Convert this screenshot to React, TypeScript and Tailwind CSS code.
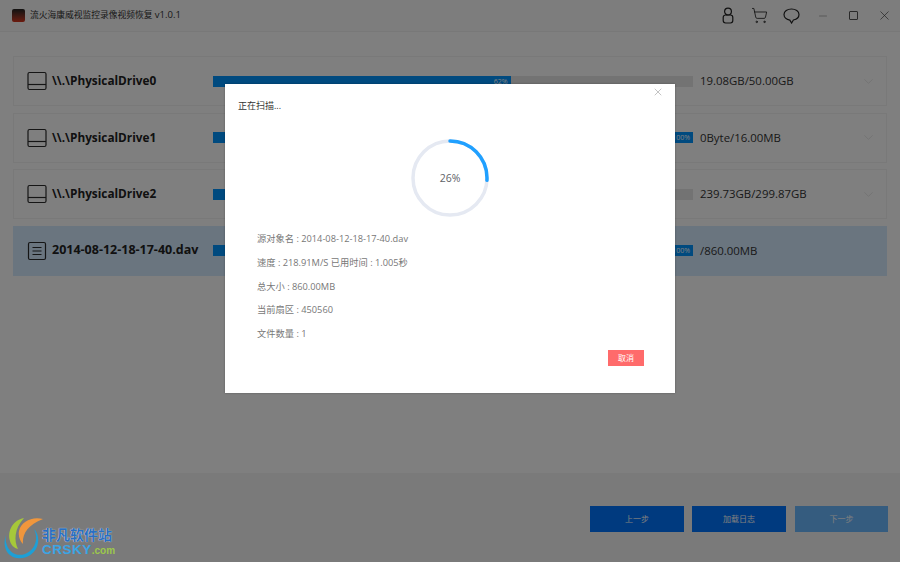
import React from 'react';
import { ChevronDown, ShoppingCart, X, Minus } from 'lucide-react';

const font = "font-['Open_Sans','Noto_Sans_CJK_SC',sans-serif]";

const rows = [
  { name: '\\\\.\\PhysicalDrive0', pct: 62, size: '19.08GB/50.00GB', icon: 'disk' },
  { name: '\\\\.\\PhysicalDrive1', pct: 100, size: '0Byte/16.00MB', icon: 'disk' },
  { name: '\\\\.\\PhysicalDrive2', pct: 80, size: '239.73GB/299.87GB', icon: 'disk' },
  { name: '2014-08-12-18-17-40.dav', pct: 100, size: '/860.00MB', icon: 'file', active: true },
];

const infoLines = [
  '源对象名 : 2014-08-12-18-17-40.dav',
  '速度 : 218.91M/S 已用时间 : 1.005秒',
  '总大小 : 860.00MB',
  '当前扇区 : 450560',
  '文件数量 : 1',
];

const DiskIcon = () => (
  <svg width="20" height="20" viewBox="0 0 20 20" fill="none" stroke="#2b2b2b" strokeWidth="1.2">
    <rect x="1" y="1.5" width="18" height="17" rx="1.5" />
    <path d="M1 13.5h18" />
  </svg>
);

const FileIcon = () => (
  <svg width="20" height="20" viewBox="0 0 20 20" fill="none" stroke="#2b2b2b" strokeWidth="1.2">
    <rect x="1.5" y="1.5" width="17" height="17" rx="1.5" />
    <path d="M5.5 6.5h9M5.5 10h9M5.5 13.5h9" />
  </svg>
);

const Logo = () => (
  <svg width="42" height="42" viewBox="0 0 42 42">
    <path d="M21 1C10 3 4 14 7 24c1 4 4 7 8 8C11 24 11 12 21 1z" fill="#a6c83a" />
    <path d="M40 2C30-1 18 4 16 14c-1 5 1 10 4 13C19 18 24 8 40 2z" fill="#f0963c" />
    <path d="M31 12c5 10 1 21-9 25C13 40 5 35 3 25c-1-4 0-8 2-11-6 10-4 22 5 26 10 4 23-2 25-14 1-6-1-11-4-14z" fill="#1d9fd6" />
  </svg>
);

const App: React.FC = () => {
  return (
    <div className={`relative w-[900px] h-[562px] overflow-hidden bg-white ${font}`}>
      {/* Title bar */}
      <div className="h-[32px] flex items-center bg-[#fbfbfb] border-b border-[#f0f0f0] pl-[12px] pr-[8px]">
        <div className="w-[13px] h-[13px] rounded-[2px] bg-gradient-to-b from-[#222] to-[#d8341c]" />
        <span className="ml-[5px] text-[8.75px] text-[#333] whitespace-nowrap">
          流火海康威视监控录像视频恢复 <span className="text-[9.5px]">v1.0.1</span>
        </span>
        <div className="ml-auto flex items-center text-[#222]">
          <svg width="12" height="17" viewBox="0 0 12 17" fill="none" stroke="currentColor" strokeWidth="1.2" className="mr-[17px]">
            <circle cx="6" cy="4.6" r="3.4" />
            <rect x="1.2" y="8" width="9.6" height="8" rx="2.4" />
          </svg>
          <ShoppingCart size={17} strokeWidth={1.2} className="mr-[15px]" />
          <svg width="17" height="16" viewBox="0 0 17 16" fill="none" stroke="currentColor" strokeWidth="1.2" className="mr-[17px]">
            <path d="M8.5 1C4.4 1 1 3.4 1 6.6c0 3 2.8 5.1 5.8 5.5L8.6 15l1.8-3c3-.6 5.6-2.5 5.6-5.4C16 3.4 12.6 1 8.5 1z" />
          </svg>
          <Minus size={12} strokeWidth={1} className="mr-[20px] text-[#666]" />
          <div className="w-[9px] h-[9px] border border-[#555] rounded-[1px] mr-[19px]" />
          <X size={15} strokeWidth={1} className="text-[#333]" />
        </div>
      </div>

      {/* Volume list */}
      <div className="h-[441px] px-[13px] pt-[24px] flex flex-col gap-[6.5px]">
        {rows.map((row) => (
          <div
            key={row.name}
            className={`h-[50px] flex items-center pl-[13px] pr-[10px] border ${
              row.active ? 'bg-[#d4eaff] border-[#d4eaff]' : 'bg-white border-[#f2f2f2]'
            }`}
          >
            <div className="w-[20px]">{row.icon === 'disk' ? <DiskIcon /> : <FileIcon />}</div>
            <span
              className={`ml-[5px] w-[161px] font-bold text-[#222] whitespace-nowrap ${
                row.active ? 'text-[12.5px]' : 'text-[11.8px]'
              }`}
            >
              {row.name}
            </span>
            <div className="w-[480px] h-[11px] bg-[#e6e6e6]">
              <div
                className="h-full bg-[#0094ff] flex items-center justify-end pr-[3px] text-[7px] leading-none text-white"
                style={{ width: `${row.pct}%` }}
              >
                {row.pct}%
              </div>
            </div>
            <span className="ml-[7px] text-[11.4px] text-[#333] whitespace-nowrap">{row.size}</span>
            {!row.active && <ChevronDown size={15} strokeWidth={0.9} className="ml-auto text-[#d4d4d4]" />}
          </div>
        ))}
      </div>

      {/* Footer */}
      <div className="h-[89px] bg-[#f4f4f4] flex justify-end items-start pt-[33px] pr-[12px]">
        <button className="w-[94px] h-[26px] bg-[#0074ff] text-white text-[8px]">上一步</button>
        <button className="ml-[8px] w-[94px] h-[26px] bg-[#0074ff] text-white text-[8px]">加载日志</button>
        <button className="ml-[9px] w-[93px] h-[26px] bg-[#6ab8ff] text-white text-[8px]">下一步</button>
      </div>

      {/* Dim layer and scan dialog */}
      <div className="absolute inset-0 bg-black/50 flex justify-center items-start pt-[84px]">
        <div className="w-[450px] h-[309px] bg-white relative pt-[15px] shadow-[0_0_2px_rgba(0,0,0,0.3)]">
          <X size={12} strokeWidth={1} className="absolute top-[2px] right-[11px] text-[#888]" />
          <div className="pl-[13px] text-[9px] leading-[13px] text-[#333]">正在扫描...</div>
          <div className="relative w-[78px] h-[78px] mx-auto mt-[27px]">
            <svg width="78" height="78" viewBox="0 0 78 78" className="-rotate-90">
              <circle cx="39" cy="39" r="37" fill="none" stroke="#e5e9f2" strokeWidth="3.5" />
              <circle
                cx="39"
                cy="39"
                r="37"
                fill="none"
                stroke="#20a0ff"
                strokeWidth="3.5"
                strokeLinecap="round"
                strokeDasharray="60.4 232.5"
              />
            </svg>
            <div className="absolute inset-0 pt-[2px] flex items-center justify-center text-[10.5px] text-[#606266]">26%</div>
          </div>
          <div className="pl-[32px] mt-[10px] flex flex-col">
            {infoLines.map((line) => (
              <div key={line} className="h-[23.8px] flex items-center text-[9.25px] text-[#777] whitespace-nowrap">
                {line}
              </div>
            ))}
          </div>
          <div className="flex justify-end pr-[31px] mt-[4px]">
            <button className="w-[36px] h-[16px] bg-[#ff6b6b] text-white text-[8px] leading-none">取消</button>
          </div>
        </div>
      </div>

      {/* Watermark */}
      <div className="absolute left-[3px] bottom-[3px] flex items-end">
        <Logo />
        <div className="-ml-[3px] mb-[2px] flex flex-col">
          <div className="text-[14px] h-[16px] leading-[16px] font-bold text-[#2a6fc0] whitespace-nowrap [text-shadow:0_0_1px_#fff]">非凡软件站</div>
          <div className="text-[13.5px] h-[14px] leading-[14px] font-bold tracking-[0.5px] text-[#3aa5e6] whitespace-nowrap font-['Liberation_Sans',sans-serif]">
            CRSKY<span className="text-[10px] tracking-normal text-[#9cc94a]">.com</span>
          </div>
        </div>
      </div>
    </div>
  );
};

export default App;
